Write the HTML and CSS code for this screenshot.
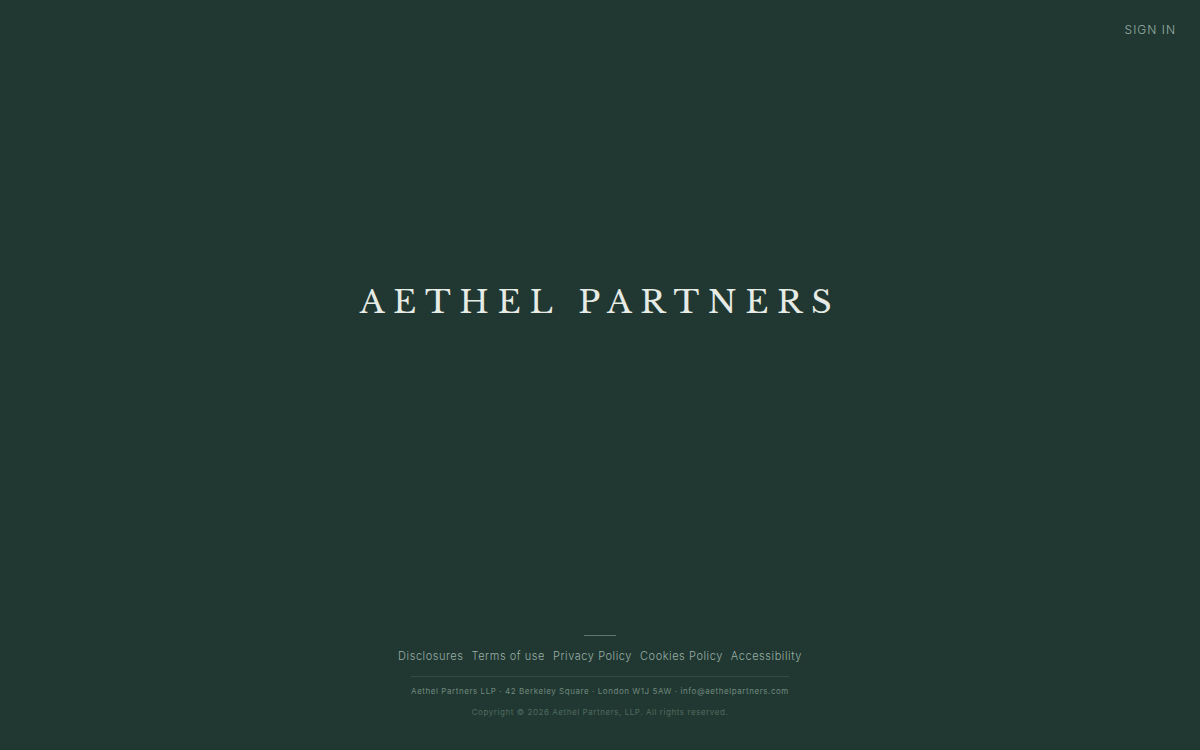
FILE: index.html
```html
<!DOCTYPE html>
<html lang="en">
<head>
<meta charset="utf-8">
<meta name="viewport" content="width=device-width, initial-scale=1">
<title>Aethel Partners</title>
<link rel="stylesheet" href="styles.css">
</head>
<body>
<div class="page">
  <header class="header"><a class="sign-in" href="#">SIGN IN</a></header>
  <main class="hero"><h1 class="wordmark">AETHEL PARTNERS</h1></main>
  <footer class="footer">
    <div class="accent"></div>
    <nav class="links" aria-label="Legal">
      <a href="#">Disclosures</a>
      <a href="#">Terms of use</a>
      <a href="#">Privacy Policy</a>
      <a href="#">Cookies Policy</a>
      <a href="#">Accessibility</a>
    </nav>
    <p class="address">Aethel Partners LLP · 42 Berkeley Square · London W1J 5AW · <a href="#">info@aethelpartners.com</a></p>
    <p class="copyright">Copyright © 2026 Aethel Partners, LLP. All rights reserved.</p>
  </footer>
</div>
</body>
</html>
```
FILE: styles.css
```css
* { box-sizing: border-box; }
body {
  margin: 0;
  background: #203831;
  color: #e6ebe5;
  font-family: Inter, "Liberation Sans", sans-serif;
}
a { color: inherit; text-decoration: none; }
.page {
  display: flex;
  flex-direction: column;
  min-height: 100vh;
}
.header {
  display: flex;
  justify-content: flex-end;
  padding: 20px 24px 0;
}
.sign-in {
  color: #9aaea5;
  font-size: 12px;
  font-weight: 300;
  line-height: 20px;
  letter-spacing: 1px;
}
.hero {
  flex: 1;
  display: flex;
  align-items: center;
  justify-content: center;
  padding-bottom: 72px;
}
.wordmark {
  margin: 0;
  font-family: "Libre Baskerville", "Liberation Serif", serif;
  font-size: 32px;
  font-weight: 400;
  line-height: 48px;
  letter-spacing: 0.27em;
}
.footer {
  display: flex;
  flex-direction: column;
  align-items: center;
  padding-bottom: 31px;
}
.accent {
  width: 32px;
  height: 1px;
  background: #5c776c;
}
.links {
  display: flex;
  gap: 8px;
  margin-top: 11px;
  color: #9aaea5;
  font-size: 11px;
  font-weight: 300;
  line-height: 18px;
  letter-spacing: 0.05em;
}
.address,
.copyright {
  margin: 0;
  font-size: 8px;
  line-height: 14px;
  letter-spacing: 0.07em;
}
.address {
  margin-top: 11px;
  padding-top: 7px;
  border-top: 1px solid #334c42;
  color: #70887e;
}
.copyright {
  margin-top: 7px;
  color: #506a5f;
}
```
